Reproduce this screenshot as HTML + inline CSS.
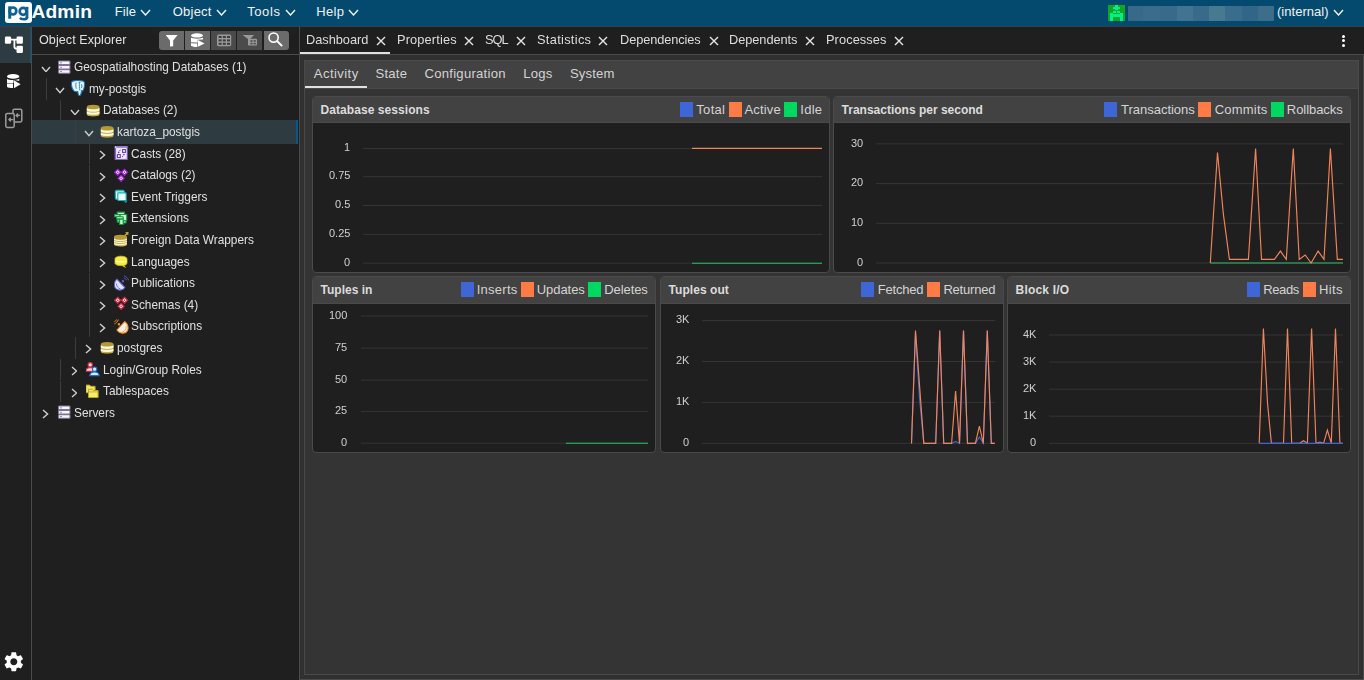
<!DOCTYPE html>
<html><head><meta charset="utf-8"><title>pgAdmin 4</title>
<style>
html,body{margin:0;padding:0;width:1364px;height:680px;overflow:hidden;background:#1f1f1f}
body{position:relative;font-family:"Liberation Sans", sans-serif}
.r{position:absolute}
.t{position:absolute;white-space:pre;line-height:1}
.g{will-change:transform}
</style></head><body>
<div class="r" style="left:0px;top:0px;width:1364px;height:680px;background:#1f1f1f;"></div>
<div class="r" style="left:0px;top:0px;width:1364px;height:26px;background:#044a6f;"></div>
<div class="r" style="left:0px;top:26px;width:1364px;height:1px;background:#3e3e3e;"></div>
<div class="r" style="left:5px;top:2px;width:27px;height:21px;background:#fff;border-radius:3px"></div>
<svg class="r" style="left:0;top:0" width="32" height="26" viewBox="0 0 32 26"><g fill="#0f5f98">
<rect x="8.2" y="6.3" width="3" height="12.4"/>
<ellipse cx="12.95" cy="11" rx="3.35" ry="3.5" fill="none" stroke="#0f5f98" stroke-width="2.7"/>
<ellipse cx="23.1" cy="11.45" rx="3.4" ry="3.5" fill="none" stroke="#0f5f98" stroke-width="2.7"/>
<rect x="25.6" y="6.8" width="2.8" height="11"/>
<path d="M28.4,17.2 C28.4,19.8 26.6,20.5 23.6,20.5 C21.5,20.5 20,20 19,18.8 L20.8,17 C21.6,17.8 22.6,18 23.6,18 C25,18 25.6,17.6 25.6,16.8 Z"/>
</g></svg>
<div class="t" style="left:31.40px;top:2.15px;font-size:19.2px;color:#ffffff;font-weight:700;letter-spacing:0.199px;">Admin</div>
<div class="t" style="left:114.70px;top:5.00px;font-size:13px;color:#f2f2f2;font-weight:400;letter-spacing:0.149px;">File</div>
<svg class="r" style="left:140px;top:8.7px" width="11" height="7"><polyline points="1,1 5.5,6 10,1" fill="none" stroke="#f2f2f2" stroke-width="1.4"/></svg>
<div class="t" style="left:172.70px;top:5.00px;font-size:13px;color:#f2f2f2;font-weight:400;letter-spacing:0.244px;">Object</div>
<svg class="r" style="left:215.5px;top:8.7px" width="11" height="7"><polyline points="1,1 5.5,6 10,1" fill="none" stroke="#f2f2f2" stroke-width="1.4"/></svg>
<div class="t" style="left:247.20px;top:5.00px;font-size:13px;color:#f2f2f2;font-weight:400;letter-spacing:0.585px;">Tools</div>
<svg class="r" style="left:284.5px;top:8.7px" width="11" height="7"><polyline points="1,1 5.5,6 10,1" fill="none" stroke="#f2f2f2" stroke-width="1.4"/></svg>
<div class="t" style="left:316.20px;top:5.00px;font-size:13px;color:#f2f2f2;font-weight:400;letter-spacing:0.317px;">Help</div>
<svg class="r" style="left:347.5px;top:8.7px" width="11" height="7"><polyline points="1,1 5.5,6 10,1" fill="none" stroke="#f2f2f2" stroke-width="1.4"/></svg>
<svg class="r" style="left:1108px;top:5px" width="17" height="16" shape-rendering="crispEdges">
<rect width="17" height="16" fill="#10a624"/>
<rect x="7" y="0" width="3" height="5" fill="#00f08c"/><rect x="5" y="2" width="7" height="2" fill="#00f08c"/>
<rect x="5" y="6" width="3" height="2" fill="#00f08c"/><rect x="9" y="6" width="3" height="2" fill="#00f08c"/>
<rect x="2" y="8" width="13" height="8" fill="#00f08c"/>
<rect x="5" y="12" width="7" height="4" fill="#10a624"/>
<rect x="5" y="8" width="7" height="1" fill="#10a624"/>
</svg>
<div class="r" style="left:1128px;top:6px;width:15px;height:15px;background:#396988;"></div>
<div class="r" style="left:1143px;top:6px;width:17px;height:15px;background:#3b6c8a;"></div>
<div class="r" style="left:1160px;top:6px;width:17px;height:15px;background:#396a89;"></div>
<div class="r" style="left:1177px;top:6px;width:16px;height:15px;background:#42748f;"></div>
<div class="r" style="left:1193px;top:6px;width:16px;height:15px;background:#386a89;"></div>
<div class="r" style="left:1209px;top:6px;width:16px;height:15px;background:#477990;"></div>
<div class="r" style="left:1225px;top:6px;width:17px;height:15px;background:#3a6d8b;"></div>
<div class="r" style="left:1242px;top:6px;width:16px;height:15px;background:#326688;"></div>
<div class="r" style="left:1258px;top:6px;width:16px;height:15px;background:#3c6d8a;"></div>
<div class="t" style="left:1277.00px;top:5.40px;font-size:13px;color:#f2f2f2;font-weight:400;letter-spacing:0.023px;">(internal)</div>
<svg class="r" style="left:1332.5px;top:9px" width="11" height="7"><polyline points="1,1 5.5,6 10,1" fill="none" stroke="#f2f2f2" stroke-width="1.4"/></svg>
<div class="r" style="left:0px;top:27px;width:30px;height:36px;background:#2d3b42;"></div>
<div class="r" style="left:30px;top:27px;width:1px;height:36px;background:#0b5784;"></div>
<div class="r" style="left:31px;top:27px;width:1px;height:653px;background:#4a4a4a;"></div>
<div class="t g" style="left:39.30px;top:33.63px;font-size:12.6px;color:#e0e0e0;font-weight:400;letter-spacing:0.050px;">Object Explorer</div>
<div class="r" style="left:32px;top:54px;width:267px;height:1px;background:#4a4a4a;"></div>
<div class="r" style="left:299px;top:27px;width:1px;height:653px;background:#4a4a4a;"></div>
<div class="r" style="left:159px;top:31px;width:25px;height:19px;background:#6b6b6b;border-radius:3px 0 0 3px"></div>
<div class="r" style="left:185px;top:31px;width:25px;height:19px;background:#6b6b6b;"></div>
<div class="r" style="left:211px;top:31px;width:25px;height:19px;background:#4b4b4b;"></div>
<div class="r" style="left:237px;top:31px;width:25px;height:19px;background:#4b4b4b;"></div>
<div class="r" style="left:264px;top:31px;width:25px;height:19px;background:#6b6b6b;border-radius:0 3px 3px 0"></div>
<div class="r" style="left:32px;top:120px;width:264px;height:24px;background:#2e3c42;"></div>
<div class="r" style="left:296px;top:120px;width:2px;height:24px;background:#0b5784;"></div>
<svg class="r" style="left:41.0px;top:65.60000000000001px" width="10" height="6.6"><polyline points="1,1 5.0,5.6 9,1" fill="none" stroke="#d0d0d0" stroke-width="1.4"/></svg>
<svg class="r" style="left:57.00px;top:58.50px" width="16" height="16" viewBox="0 0 16 16"><g transform="translate(0,-0.6)"><g fill="#f8f6fc" stroke="#7f7398" stroke-width="1.1">
<rect x="1.5" y="2.6" width="11.5" height="3.6" rx="0.8"/>
<rect x="1.5" y="7" width="11.5" height="3.6" rx="0.8"/>
<rect x="1.5" y="11.3" width="11.5" height="3.6" rx="0.8"/>
</g><g fill="#8a7fa6"><rect x="3" y="4" width="2" height="0.9"/><rect x="3" y="8.4" width="2" height="0.9"/><rect x="3" y="12.7" width="2" height="0.9"/></g></g></svg>
<div class="t g" style="left:74.40px;top:62.27px;font-size:11.85px;color:#e0e0e0;font-weight:400;">Geospatialhosting Databases (1)</div>
<div class="r" style="left:46.00px;top:78.10px;width:1px;height:21.6px;background:#3c3c3c"></div>
<svg class="r" style="left:55.269999999999996px;top:87.20000000000002px" width="10" height="6.6"><polyline points="1,1 5.0,5.6 9,1" fill="none" stroke="#d0d0d0" stroke-width="1.4"/></svg>
<svg class="r" style="left:71.27px;top:80.10px" width="16" height="16" viewBox="0 0 16 16"><path d="M1.5,1.2 C4,0.5 10,0.5 12.5,1.2 C13.7,1.8 13.7,4 13.3,6.5 C12.9,9 12.1,11 11,11.2 L10.6,10.2 C10.4,12.5 10.2,14.5 9.1,15.4 C8.1,15.9 7.4,15.2 7.2,14 L6.8,11.6 C5.5,11.9 4,11.6 3,10.9 C1.5,9.6 0.6,7 0.4,4.5 C0.3,2.8 0.7,1.6 1.5,1.2 Z" fill="#e4f7ff" stroke="#2277b4" stroke-width="1.1"/>
<path d="M5.2,2.6 C4.5,4.5 4.6,6.8 5.4,8.6 M7.6,2.2 L9.6,2.2 M8.6,2.4 C8.2,5 8.4,8 8.9,10.5 M10.6,4.2 C11,5.5 10.9,7 10.4,8.2" stroke="#2a7cb8" stroke-width="0.9" fill="none"/></svg>
<div class="t g" style="left:88.67px;top:83.87px;font-size:11.85px;color:#e0e0e0;font-weight:400;">my-postgis</div>
<div class="r" style="left:60.27px;top:99.70px;width:1px;height:21.6px;background:#3c3c3c"></div>
<svg class="r" style="left:69.53999999999999px;top:108.80000000000001px" width="10" height="6.6"><polyline points="1,1 5.0,5.6 9,1" fill="none" stroke="#d0d0d0" stroke-width="1.4"/></svg>
<svg class="r" style="left:85.54px;top:101.70px" width="16" height="16" viewBox="0 0 16 16"><g transform="translate(0,0.6)"><g>
<path d="M0.8,4.3 L0.8,12 C0.8,13.2 3.6,13.9 7.15,13.9 C10.7,13.9 13.5,13.2 13.5,12 L13.5,4.3 Z" fill="#c2a843"/>
<ellipse cx="7.15" cy="4.3" rx="6.35" ry="2.2" fill="#b39a36"/>
<path d="M0.8,5.4 C1.4,7.2 12.9,7.2 13.5,5.4 L13.5,7.8 C12.9,9.6 1.4,9.6 0.8,7.8 Z" fill="#fbf8dc"/>
<path d="M0.8,8.6 C1.4,10.4 12.9,10.4 13.5,8.6 L13.5,10.9 C12.9,12.7 1.4,12.7 0.8,10.9 Z" fill="#fbf8dc"/>
</g></g></svg>
<div class="t g" style="left:102.94px;top:105.47px;font-size:11.85px;color:#e0e0e0;font-weight:400;">Databases (2)</div>
<div class="r" style="left:74.54px;top:121.30px;width:1px;height:21.6px;background:#3c3c3c"></div>
<svg class="r" style="left:83.81px;top:130.4px" width="10" height="6.6"><polyline points="1,1 5.0,5.6 9,1" fill="none" stroke="#d0d0d0" stroke-width="1.4"/></svg>
<svg class="r" style="left:99.81px;top:123.30px" width="16" height="16" viewBox="0 0 16 16"><g transform="translate(0,0.8)"><g>
<path d="M0.8,4.3 L0.8,12 C0.8,13.2 3.6,13.9 7.15,13.9 C10.7,13.9 13.5,13.2 13.5,12 L13.5,4.3 Z" fill="#c2a843"/>
<ellipse cx="7.15" cy="4.3" rx="6.35" ry="2.2" fill="#b39a36"/>
<path d="M0.8,5.4 C1.4,7.2 12.9,7.2 13.5,5.4 L13.5,7.8 C12.9,9.6 1.4,9.6 0.8,7.8 Z" fill="#fbf8dc"/>
<path d="M0.8,8.6 C1.4,10.4 12.9,10.4 13.5,8.6 L13.5,10.9 C12.9,12.7 1.4,12.7 0.8,10.9 Z" fill="#fbf8dc"/>
</g></g></svg>
<div class="t g" style="left:117.21px;top:127.07px;font-size:11.85px;color:#e0e0e0;font-weight:400;">kartoza_postgis</div>
<div class="r" style="left:88.81px;top:142.90px;width:1px;height:21.6px;background:#3c3c3c"></div>
<svg class="r" style="left:99.38px;top:150.00000000000003px" width="6.6" height="10"><polyline points="1,1 5.6,5.0 1,9" fill="none" stroke="#d0d0d0" stroke-width="1.4"/></svg>
<svg class="r" style="left:114.08px;top:144.90px" width="16" height="16" viewBox="0 0 16 16"><rect x="0.6" y="1.2" width="13.2" height="13.8" rx="0.6" fill="#8a62d6"/>
<rect x="2.1" y="2.7" width="10.6" height="11.2" fill="#f0eaff"/>
<path d="M0.6,1.2 L13.8,1.2 L12.7,2.7 L2.1,2.7 Z" fill="#a888e6"/>
<circle cx="1.5" cy="2.2" r="0.8" fill="#f3eeff"/>
<rect x="8.6" y="4.6" width="2.8" height="2.8" fill="#fff" stroke="#6a3cc4" stroke-width="1.1"/>
<rect x="3.4" y="9.6" width="2.9" height="2.9" fill="#fff" stroke="#6a3cc4" stroke-width="1.1"/>
<circle cx="4.7" cy="7.4" r="0.8" fill="#5a2cc0"/><circle cx="9.9" cy="9.6" r="0.8" fill="#5a2cc0"/>
<path d="M5.3,5.6 L6.6,5.1 M8,11.7 L9.2,11.2" stroke="#6a3cc4" stroke-width="0.9"/></svg>
<div class="t g" style="left:131.48px;top:148.67px;font-size:11.85px;color:#e0e0e0;font-weight:400;">Casts (28)</div>
<div class="r" style="left:88.81px;top:164.50px;width:1px;height:21.6px;background:#3c3c3c"></div>
<svg class="r" style="left:99.38px;top:171.6px" width="6.6" height="10"><polyline points="1,1 5.6,5.0 1,9" fill="none" stroke="#d0d0d0" stroke-width="1.4"/></svg>
<svg class="r" style="left:114.08px;top:166.50px" width="16" height="16" viewBox="0 0 16 16"><g fill="#f4ecff" stroke="#9a1ed8" stroke-width="1.3">
<path d="M3.7,2.3 L6.7,5.3 L3.7,8.3 L0.7000000000000002,5.3 Z"/><path d="M10.5,2.3 L13.5,5.3 L10.5,8.3 L7.5,5.3 Z"/><path d="M7.1,8.3 L10.1,11.3 L7.1,14.3 L4.1,11.3 Z"/>
</g><g fill="#9a1ed8"><circle cx="3.7" cy="5.3" r="0.8"/><circle cx="10.5" cy="5.3" r="0.8"/><circle cx="7.1" cy="11.3" r="0.8"/></g></svg>
<div class="t g" style="left:131.48px;top:170.27px;font-size:11.85px;color:#e0e0e0;font-weight:400;">Catalogs (2)</div>
<div class="r" style="left:88.81px;top:186.10px;width:1px;height:21.6px;background:#3c3c3c"></div>
<svg class="r" style="left:99.38px;top:193.20000000000002px" width="6.6" height="10"><polyline points="1,1 5.6,5.0 1,9" fill="none" stroke="#d0d0d0" stroke-width="1.4"/></svg>
<svg class="r" style="left:114.08px;top:188.10px" width="16" height="16" viewBox="0 0 16 16"><rect x="1.3" y="2.3" width="9" height="9" rx="1.4" fill="#8fdfe6" stroke="#1aaebb" stroke-width="1.1"/>
<path d="M2.6,3.8 L2.6,9.8" stroke="#f0ffff" stroke-width="0.9"/>
<rect x="3.9" y="4.9" width="8.2" height="7.6" rx="0.8" fill="#eafeff" stroke="#20b3c0" stroke-width="1.1"/>
<path d="M10.2,12.5 L12.2,14.6" stroke="#1796a3" stroke-width="1.4"/><path d="M11.2,12 L13.4,12.6 L12.6,14.8 Z" fill="#1796a3"/></svg>
<div class="t g" style="left:131.48px;top:191.87px;font-size:11.85px;color:#e0e0e0;font-weight:400;">Event Triggers</div>
<div class="r" style="left:88.81px;top:207.70px;width:1px;height:21.6px;background:#3c3c3c"></div>
<svg class="r" style="left:99.38px;top:214.80000000000004px" width="6.6" height="10"><polyline points="1,1 5.6,5.0 1,9" fill="none" stroke="#d0d0d0" stroke-width="1.4"/></svg>
<svg class="r" style="left:114.08px;top:209.70px" width="16" height="16" viewBox="0 0 16 16"><g fill="#c9f4d2" stroke="#119a3c" stroke-width="1.1" stroke-linejoin="round">
<rect x="3.2" y="2.1" width="7.4" height="2.4"/>
<rect x="5.9" y="4.5" width="6.8" height="6.1"/>
<rect x="0.6" y="4.6" width="5.3" height="2.2"/>
<rect x="3.2" y="8.9" width="1.9" height="3.2"/>
<rect x="5.6" y="8.9" width="3.6" height="5.6"/>
<rect x="9.6" y="10.8" width="2.4" height="2.2"/>
<rect x="2.6" y="6.8" width="6.6" height="2.1"/>
</g></svg>
<div class="t g" style="left:131.48px;top:213.47px;font-size:11.85px;color:#e0e0e0;font-weight:400;">Extensions</div>
<div class="r" style="left:88.81px;top:229.30px;width:1px;height:21.6px;background:#3c3c3c"></div>
<svg class="r" style="left:99.38px;top:236.4px" width="6.6" height="10"><polyline points="1,1 5.6,5.0 1,9" fill="none" stroke="#d0d0d0" stroke-width="1.4"/></svg>
<svg class="r" style="left:114.08px;top:231.30px" width="16" height="16" viewBox="0 0 16 16"><g>
<path d="M-0.1,6 L-0.1,13.4 C-0.1,14.7 2.8,15.5 6.45,15.5 C10.1,15.5 13,14.7 13,13.4 L13,6 Z" fill="#c2a843"/>
<ellipse cx="6.45" cy="6" rx="6.55" ry="2.3" fill="#b39a36"/>
<path d="M0,7.6 C0.8,9.4 12.1,9.4 12.9,7.6 L12.9,8.8 C12.1,10.6 0.8,10.6 0,8.8 Z" fill="#f6f0cc"/>
<path d="M0,9.6 C0.8,11.4 12.1,11.4 12.9,9.6 L12.9,10.8 C12.1,12.6 0.8,12.6 0,10.8 Z" fill="#f6f0cc"/>
<path d="M0,11.6 C0.8,13.4 12.1,13.4 12.9,11.6 L12.9,12.9 C12.1,14.7 0.8,14.7 0,12.9 Z" fill="#f6f0cc"/>
<path d="M10.6,4.8 L13.4,2.2" stroke="#c9ab2c" stroke-width="1.4"/><path d="M11,1.2 L14.6,1 L14.2,4.6 Z" fill="#c9ab2c"/>
</g></svg>
<div class="t g" style="left:131.48px;top:235.07px;font-size:11.85px;color:#e0e0e0;font-weight:400;">Foreign Data Wrappers</div>
<div class="r" style="left:88.81px;top:250.90px;width:1px;height:21.6px;background:#3c3c3c"></div>
<svg class="r" style="left:99.38px;top:258.0px" width="6.6" height="10"><polyline points="1,1 5.6,5.0 1,9" fill="none" stroke="#d0d0d0" stroke-width="1.4"/></svg>
<svg class="r" style="left:114.08px;top:252.90px" width="16" height="16" viewBox="0 0 16 16"><path d="M1,6 C1,4.2 3.8,3.2 7,3.2 C10.2,3.2 13,4.2 13,6 L13,10 C13,11.6 11,12.3 9.5,12.4 L11.5,14.3 L8,12.6 C4,12.6 1,11.8 1,10 Z" fill="#f5ec48" stroke="#d7c521" stroke-width="0.8"/>
<path d="M1.4,7.8 C3,9.2 11,9.2 12.6,7.8" stroke="#fffab0" stroke-width="1.1" fill="none"/></svg>
<div class="t g" style="left:131.48px;top:256.67px;font-size:11.85px;color:#e0e0e0;font-weight:400;">Languages</div>
<div class="r" style="left:88.81px;top:272.50px;width:1px;height:21.6px;background:#3c3c3c"></div>
<svg class="r" style="left:99.38px;top:279.59999999999997px" width="6.6" height="10"><polyline points="1,1 5.6,5.0 1,9" fill="none" stroke="#d0d0d0" stroke-width="1.4"/></svg>
<svg class="r" style="left:114.08px;top:274.50px" width="16" height="16" viewBox="0 0 16 16"><path d="M2.9,4.1 L11,12.5 C9,15.5 4,16.3 1.3,13 C-0.6,10.5 0.2,6.4 2.9,4.1 Z" fill="#e2e4fa" stroke="#5a5fcc" stroke-width="1.1" stroke-linejoin="round"/>
<path d="M2.4,8.6 C2.4,11 3.8,13.2 6.6,14" stroke="#6a6fd0" stroke-width="0.9" fill="none"/>
<rect x="7.8" y="5.1" width="2.2" height="2.2" fill="#5a5fd8"/>
<path d="M9.9,0.8 C12,1.4 14,3.2 14.6,5.3 M9.9,2.8 C11.2,3.2 12.2,4.2 12.6,5.3" stroke="#5055c0" stroke-width="1" fill="none"/></svg>
<div class="t g" style="left:131.48px;top:278.27px;font-size:11.85px;color:#e0e0e0;font-weight:400;">Publications</div>
<div class="r" style="left:88.81px;top:294.10px;width:1px;height:21.6px;background:#3c3c3c"></div>
<svg class="r" style="left:99.38px;top:301.2px" width="6.6" height="10"><polyline points="1,1 5.6,5.0 1,9" fill="none" stroke="#d0d0d0" stroke-width="1.4"/></svg>
<svg class="r" style="left:114.08px;top:296.10px" width="16" height="16" viewBox="0 0 16 16"><g fill="#fff0f2" stroke="#d0223e" stroke-width="1.3">
<path d="M3.7,1.2999999999999998 L6.7,4.3 L3.7,7.3 L0.7000000000000002,4.3 Z"/><path d="M10.5,1.2999999999999998 L13.5,4.3 L10.5,7.3 L7.5,4.3 Z"/><path d="M7.1,7.300000000000001 L10.1,10.3 L7.1,13.3 L4.1,10.3 Z"/>
</g><g fill="#d0223e"><circle cx="3.7" cy="4.3" r="0.8"/><circle cx="10.5" cy="4.3" r="0.8"/><circle cx="7.1" cy="10.3" r="0.8"/></g></svg>
<div class="t g" style="left:131.48px;top:299.87px;font-size:11.85px;color:#e0e0e0;font-weight:400;">Schemas (4)</div>
<div class="r" style="left:88.81px;top:315.70px;width:1px;height:21.6px;background:#3c3c3c"></div>
<svg class="r" style="left:99.38px;top:322.8px" width="6.6" height="10"><polyline points="1,1 5.6,5.0 1,9" fill="none" stroke="#d0d0d0" stroke-width="1.4"/></svg>
<svg class="r" style="left:114.08px;top:317.70px" width="16" height="16" viewBox="0 0 16 16"><path d="M2.9,12 L10.7,3.6 C13.5,5.5 15,9.5 13.6,12.6 C12,15.8 6,16.4 2.9,12 Z" fill="#fff0e0" stroke="#f38a22" stroke-width="1.1" stroke-linejoin="round"/>
<path d="M12.2,8.2 C12.4,11 10.8,13.4 8,14.2" stroke="#f5a050" stroke-width="0.9" fill="none"/>
<rect x="3.8" y="5.2" width="2.2" height="2.2" fill="#f39022"/>
<path d="M0.4,6 C1.8,5.4 3.8,3.6 4.4,1.6 M0.3,3.8 C1.2,3.4 2.4,2.4 2.8,1.4" stroke="#e8891e" stroke-width="1" fill="none"/></svg>
<div class="t g" style="left:131.48px;top:321.47px;font-size:11.85px;color:#e0e0e0;font-weight:400;">Subscriptions</div>
<div class="r" style="left:74.54px;top:337.30px;width:1px;height:21.6px;background:#3c3c3c"></div>
<svg class="r" style="left:85.11px;top:344.4px" width="6.6" height="10"><polyline points="1,1 5.6,5.0 1,9" fill="none" stroke="#d0d0d0" stroke-width="1.4"/></svg>
<svg class="r" style="left:99.81px;top:339.30px" width="16" height="16" viewBox="0 0 16 16"><g transform="translate(0,0.8)"><g>
<path d="M0.8,4.3 L0.8,12 C0.8,13.2 3.6,13.9 7.15,13.9 C10.7,13.9 13.5,13.2 13.5,12 L13.5,4.3 Z" fill="#c2a843"/>
<ellipse cx="7.15" cy="4.3" rx="6.35" ry="2.2" fill="#b39a36"/>
<path d="M0.8,5.4 C1.4,7.2 12.9,7.2 13.5,5.4 L13.5,7.8 C12.9,9.6 1.4,9.6 0.8,7.8 Z" fill="#fbf8dc"/>
<path d="M0.8,8.6 C1.4,10.4 12.9,10.4 13.5,8.6 L13.5,10.9 C12.9,12.7 1.4,12.7 0.8,10.9 Z" fill="#fbf8dc"/>
</g></g></svg>
<div class="t g" style="left:117.21px;top:343.07px;font-size:11.85px;color:#e0e0e0;font-weight:400;">postgres</div>
<div class="r" style="left:60.27px;top:358.90px;width:1px;height:21.6px;background:#3c3c3c"></div>
<svg class="r" style="left:70.83999999999999px;top:366.0px" width="6.6" height="10"><polyline points="1,1 5.6,5.0 1,9" fill="none" stroke="#d0d0d0" stroke-width="1.4"/></svg>
<svg class="r" style="left:85.54px;top:360.90px" width="16" height="16" viewBox="0 0 16 16"><g transform="translate(-1.0,0)"><circle cx="5.2" cy="3.8" r="2.2" fill="#ffe0e4" stroke="#d8283f" stroke-width="1.1"/>
<path d="M0.6,10.2 C0.8,7.6 2.8,6.6 5.2,6.6 C7.6,6.6 9.2,7.4 9.6,10.2 Z" fill="#ffe0e4" stroke="#d8283f" stroke-width="1.1"/>
<circle cx="9.6" cy="8.2" r="2.2" fill="#d8ecff" stroke="#1f6fd0" stroke-width="1.1"/>
<path d="M4.8,14.6 C5,12 7,11 9.6,11 C12.2,11 13.8,12 14.2,14.6 Z" fill="#d8ecff" stroke="#1f6fd0" stroke-width="1.1"/></g></svg>
<div class="t g" style="left:102.94px;top:364.67px;font-size:11.85px;color:#e0e0e0;font-weight:400;">Login/Group Roles</div>
<div class="r" style="left:60.27px;top:380.50px;width:1px;height:21.6px;background:#3c3c3c"></div>
<svg class="r" style="left:70.83999999999999px;top:387.59999999999997px" width="6.6" height="10"><polyline points="1,1 5.6,5.0 1,9" fill="none" stroke="#d0d0d0" stroke-width="1.4"/></svg>
<svg class="r" style="left:85.54px;top:382.50px" width="16" height="16" viewBox="0 0 16 16"><g transform="translate(-1.3,-0.3)"><path d="M1.2,2.4 L5,2.4 L6,3.6 L10.4,3.6 L10.4,10 L1.2,10 Z" fill="#f2e56a" stroke="#b9a61c" stroke-width="1"/>
<path d="M3.8,6.6 L7.6,6.6 L8.6,7.8 L13.4,7.8 L13.4,14.8 L3.8,14.8 Z" fill="#f6ea70" stroke="#b9a61c" stroke-width="1"/>
<path d="M3.8,9.2 L13.4,9.2" stroke="#b9a61c" stroke-width="0.8"/></g></svg>
<div class="t g" style="left:102.94px;top:386.27px;font-size:11.85px;color:#e0e0e0;font-weight:400;">Tablespaces</div>
<svg class="r" style="left:42.3px;top:409.2px" width="6.6" height="10"><polyline points="1,1 5.6,5.0 1,9" fill="none" stroke="#d0d0d0" stroke-width="1.4"/></svg>
<svg class="r" style="left:57.00px;top:404.10px" width="16" height="16" viewBox="0 0 16 16"><g transform="translate(0,-0.6)"><g fill="#f8f6fc" stroke="#7f7398" stroke-width="1.1">
<rect x="1.5" y="2.6" width="11.5" height="3.6" rx="0.8"/>
<rect x="1.5" y="7" width="11.5" height="3.6" rx="0.8"/>
<rect x="1.5" y="11.3" width="11.5" height="3.6" rx="0.8"/>
</g><g fill="#8a7fa6"><rect x="3" y="4" width="2" height="0.9"/><rect x="3" y="8.4" width="2" height="0.9"/><rect x="3" y="12.7" width="2" height="0.9"/></g></g></svg>
<div class="t g" style="left:74.40px;top:407.87px;font-size:11.85px;color:#e0e0e0;font-weight:400;">Servers</div>
<div class="t g" style="left:305.80px;top:34.36px;font-size:12.8px;color:#dedede;font-weight:400;letter-spacing:-0.026px;">Dashboard</div>
<svg class="r" style="left:376.2px;top:36px" width="10" height="10"><path d="M1,1 L9,9 M9,1 L1,9" stroke="#e6e6e6" stroke-width="1.4" fill="none"/></svg>
<div class="t g" style="left:396.60px;top:34.36px;font-size:12.8px;color:#dedede;font-weight:400;letter-spacing:0.141px;">Properties</div>
<svg class="r" style="left:464.2px;top:36px" width="10" height="10"><path d="M1,1 L9,9 M9,1 L1,9" stroke="#e6e6e6" stroke-width="1.4" fill="none"/></svg>
<div class="t g" style="left:484.50px;top:34.36px;font-size:12.8px;color:#dedede;font-weight:400;letter-spacing:-1.055px;">SQL</div>
<svg class="r" style="left:516.3px;top:36px" width="10" height="10"><path d="M1,1 L9,9 M9,1 L1,9" stroke="#e6e6e6" stroke-width="1.4" fill="none"/></svg>
<div class="t g" style="left:536.60px;top:34.36px;font-size:12.8px;color:#dedede;font-weight:400;letter-spacing:0.311px;">Statistics</div>
<svg class="r" style="left:598.4px;top:36px" width="10" height="10"><path d="M1,1 L9,9 M9,1 L1,9" stroke="#e6e6e6" stroke-width="1.4" fill="none"/></svg>
<div class="t g" style="left:619.80px;top:34.36px;font-size:12.8px;color:#dedede;font-weight:400;letter-spacing:-0.112px;">Dependencies</div>
<svg class="r" style="left:708.5px;top:36px" width="10" height="10"><path d="M1,1 L9,9 M9,1 L1,9" stroke="#e6e6e6" stroke-width="1.4" fill="none"/></svg>
<div class="t g" style="left:729.10px;top:34.36px;font-size:12.8px;color:#dedede;font-weight:400;letter-spacing:-0.057px;">Dependents</div>
<svg class="r" style="left:805.3px;top:36px" width="10" height="10"><path d="M1,1 L9,9 M9,1 L1,9" stroke="#e6e6e6" stroke-width="1.4" fill="none"/></svg>
<div class="t g" style="left:825.80px;top:34.36px;font-size:12.8px;color:#dedede;font-weight:400;letter-spacing:0.081px;">Processes</div>
<svg class="r" style="left:893.7px;top:36px" width="10" height="10"><path d="M1,1 L9,9 M9,1 L1,9" stroke="#e6e6e6" stroke-width="1.4" fill="none"/></svg>
<div class="r" style="left:300px;top:52px;width:90px;height:2px;background:#e0e0e0;"></div>
<div class="r" style="left:1342.3px;top:34.7px;width:3px;height:3px;border-radius:50%;background:#fff"></div>
<div class="r" style="left:1342.3px;top:39.2px;width:3px;height:3px;border-radius:50%;background:#fff"></div>
<div class="r" style="left:1342.3px;top:43.6px;width:3px;height:3px;border-radius:50%;background:#fff"></div>
<div class="r" style="left:300px;top:54px;width:1064px;height:1px;background:#4a4a4a;"></div>
<div class="r" style="left:300px;top:55px;width:1063px;height:624px;background:#303030;"></div>
<div class="r" style="left:1363px;top:55px;width:1px;height:625px;background:#4a4a4a;"></div>
<div class="r" style="left:300px;top:679px;width:1064px;height:1px;background:#4a4a4a;"></div>
<div class="r" style="left:304px;top:60px;width:1053px;height:613px;border:1px solid #4a4a4a;background:#343434"></div>
<div class="r" style="left:305px;top:61px;width:1053px;height:27px;background:#424242;"></div>
<div class="t" style="left:313.80px;top:66.91px;font-size:13.1px;color:#d4d4d4;font-weight:400;letter-spacing:0.419px;">Activity</div>
<div class="t" style="left:375.50px;top:66.91px;font-size:13.1px;color:#d4d4d4;font-weight:400;letter-spacing:0.230px;">State</div>
<div class="t" style="left:424.50px;top:66.91px;font-size:13.1px;color:#d4d4d4;font-weight:400;letter-spacing:0.259px;">Configuration</div>
<div class="t" style="left:523.20px;top:66.91px;font-size:13.1px;color:#d4d4d4;font-weight:400;letter-spacing:0.265px;">Logs</div>
<div class="t" style="left:569.90px;top:66.91px;font-size:13.1px;color:#d4d4d4;font-weight:400;letter-spacing:0.169px;">System</div>
<div class="r" style="left:305px;top:88px;width:1053px;height:1px;background:#4a4a4a;"></div>
<div class="r" style="left:305px;top:86px;width:62px;height:2px;background:#e0e0e0;"></div>
<div class="r" style="left:312px;top:96px;width:516px;height:175px;border:1px solid #4a4a4a;border-radius:4px;background:#1f1f1f;overflow:hidden"><div style="position:absolute;left:0;top:0;right:0;height:25px;background:#424242;border-bottom:1px solid #4a4a4a"></div></div>
<div class="t" style="left:320.60px;top:103.74px;font-size:12px;color:#dcdcdc;font-weight:700;letter-spacing:0.059px;">Database sessions</div>
<div class="t" style="left:696.30px;top:102.80px;font-size:13px;color:#d4d4d4;font-weight:400;letter-spacing:0.308px;">Total</div>
<div class="r" style="left:680px;top:102px;width:13px;height:15px;background:#3e66d6;"></div>
<div class="t" style="left:744.40px;top:102.80px;font-size:13px;color:#d4d4d4;font-weight:400;letter-spacing:0.179px;">Active</div>
<div class="r" style="left:729px;top:102px;width:13px;height:15px;background:#ff7b45;"></div>
<div class="t" style="left:800.30px;top:102.80px;font-size:13px;color:#d4d4d4;font-weight:400;letter-spacing:0.244px;">Idle</div>
<div class="r" style="left:784px;top:102px;width:13px;height:15px;background:#00d961;"></div>
<div class="t g" style="right:1014.00px;top:142.19px;font-size:11px;color:#d0d0d0;font-weight:400;text-align:right">1</div>
<div class="t g" style="right:1014.00px;top:170.39px;font-size:11px;color:#d0d0d0;font-weight:400;text-align:right">0.75</div>
<div class="t g" style="right:1014.00px;top:199.19px;font-size:11px;color:#d0d0d0;font-weight:400;text-align:right">0.5</div>
<div class="t g" style="right:1014.00px;top:228.09px;font-size:11px;color:#d0d0d0;font-weight:400;text-align:right">0.25</div>
<div class="t g" style="right:1014.00px;top:256.89px;font-size:11px;color:#d0d0d0;font-weight:400;text-align:right">0</div>
<div class="r" style="left:833px;top:96px;width:516px;height:175px;border:1px solid #4a4a4a;border-radius:4px;background:#1f1f1f;overflow:hidden"><div style="position:absolute;left:0;top:0;right:0;height:25px;background:#424242;border-bottom:1px solid #4a4a4a"></div></div>
<div class="t" style="left:841.60px;top:103.74px;font-size:12px;color:#dcdcdc;font-weight:700;letter-spacing:-0.004px;">Transactions per second</div>
<div class="t" style="left:1121.00px;top:102.80px;font-size:13px;color:#d4d4d4;font-weight:400;letter-spacing:-0.013px;">Transactions</div>
<div class="r" style="left:1104px;top:102px;width:13px;height:15px;background:#3e66d6;"></div>
<div class="t" style="left:1214.80px;top:102.80px;font-size:13px;color:#d4d4d4;font-weight:400;letter-spacing:0.186px;">Commits</div>
<div class="r" style="left:1198px;top:102px;width:13px;height:15px;background:#ff7b45;"></div>
<div class="t" style="left:1286.80px;top:102.80px;font-size:13px;color:#d4d4d4;font-weight:400;letter-spacing:-0.057px;">Rollbacks</div>
<div class="r" style="left:1271px;top:102px;width:13px;height:15px;background:#00d961;"></div>
<div class="t g" style="right:500.50px;top:137.59px;font-size:11px;color:#d0d0d0;font-weight:400;text-align:right">30</div>
<div class="t g" style="right:500.50px;top:177.29px;font-size:11px;color:#d0d0d0;font-weight:400;text-align:right">20</div>
<div class="t g" style="right:500.50px;top:216.99px;font-size:11px;color:#d0d0d0;font-weight:400;text-align:right">10</div>
<div class="t g" style="right:500.50px;top:256.69px;font-size:11px;color:#d0d0d0;font-weight:400;text-align:right">0</div>
<div class="r" style="left:312px;top:276px;width:342px;height:175px;border:1px solid #4a4a4a;border-radius:4px;background:#1f1f1f;overflow:hidden"><div style="position:absolute;left:0;top:0;right:0;height:26px;background:#424242;border-bottom:1px solid #4a4a4a"></div></div>
<div class="t" style="left:320.60px;top:283.74px;font-size:12px;color:#dcdcdc;font-weight:700;letter-spacing:0.002px;">Tuples in</div>
<div class="t" style="left:476.70px;top:282.80px;font-size:13px;color:#d4d4d4;font-weight:400;letter-spacing:0.264px;">Inserts</div>
<div class="r" style="left:461px;top:282px;width:13px;height:15px;background:#3e66d6;"></div>
<div class="t" style="left:536.80px;top:282.80px;font-size:13px;color:#d4d4d4;font-weight:400;letter-spacing:-0.070px;">Updates</div>
<div class="r" style="left:521px;top:282px;width:13px;height:15px;background:#ff7b45;"></div>
<div class="t" style="left:604.30px;top:282.80px;font-size:13px;color:#d4d4d4;font-weight:400;letter-spacing:-0.096px;">Deletes</div>
<div class="r" style="left:588px;top:282px;width:13px;height:15px;background:#00d961;"></div>
<div class="t g" style="right:1016.60px;top:309.69px;font-size:11px;color:#d0d0d0;font-weight:400;text-align:right">100</div>
<div class="t g" style="right:1016.60px;top:341.79px;font-size:11px;color:#d0d0d0;font-weight:400;text-align:right">75</div>
<div class="t g" style="right:1016.60px;top:373.79px;font-size:11px;color:#d0d0d0;font-weight:400;text-align:right">50</div>
<div class="t g" style="right:1016.60px;top:405.09px;font-size:11px;color:#d0d0d0;font-weight:400;text-align:right">25</div>
<div class="t g" style="right:1016.60px;top:436.89px;font-size:11px;color:#d0d0d0;font-weight:400;text-align:right">0</div>
<div class="r" style="left:660px;top:276px;width:342px;height:175px;border:1px solid #4a4a4a;border-radius:4px;background:#1f1f1f;overflow:hidden"><div style="position:absolute;left:0;top:0;right:0;height:26px;background:#424242;border-bottom:1px solid #4a4a4a"></div></div>
<div class="t" style="left:668.60px;top:283.74px;font-size:12px;color:#dcdcdc;font-weight:700;letter-spacing:0.047px;">Tuples out</div>
<div class="t" style="left:877.80px;top:282.80px;font-size:13px;color:#d4d4d4;font-weight:400;letter-spacing:-0.214px;">Fetched</div>
<div class="r" style="left:861px;top:282px;width:13px;height:15px;background:#3e66d6;"></div>
<div class="t" style="left:943.40px;top:282.80px;font-size:13px;color:#d4d4d4;font-weight:400;letter-spacing:-0.198px;">Returned</div>
<div class="r" style="left:927px;top:282px;width:13px;height:15px;background:#ff7b45;"></div>
<div class="t g" style="right:674.50px;top:314.29px;font-size:11px;color:#d0d0d0;font-weight:400;text-align:right">3K</div>
<div class="t g" style="right:674.50px;top:355.19px;font-size:11px;color:#d0d0d0;font-weight:400;text-align:right">2K</div>
<div class="t g" style="right:674.50px;top:396.09px;font-size:11px;color:#d0d0d0;font-weight:400;text-align:right">1K</div>
<div class="t g" style="right:674.50px;top:436.99px;font-size:11px;color:#d0d0d0;font-weight:400;text-align:right">0</div>
<div class="r" style="left:1007px;top:276px;width:342px;height:175px;border:1px solid #4a4a4a;border-radius:4px;background:#1f1f1f;overflow:hidden"><div style="position:absolute;left:0;top:0;right:0;height:26px;background:#424242;border-bottom:1px solid #4a4a4a"></div></div>
<div class="t" style="left:1015.60px;top:283.74px;font-size:12px;color:#dcdcdc;font-weight:700;letter-spacing:0.186px;">Block I/O</div>
<div class="t" style="left:1263.30px;top:282.80px;font-size:13px;color:#d4d4d4;font-weight:400;letter-spacing:-0.420px;">Reads</div>
<div class="r" style="left:1247px;top:282px;width:13px;height:15px;background:#3e66d6;"></div>
<div class="t" style="left:1319.10px;top:282.80px;font-size:13px;color:#d4d4d4;font-weight:400;letter-spacing:0.336px;">Hits</div>
<div class="r" style="left:1303px;top:282px;width:13px;height:15px;background:#ff7b45;"></div>
<div class="t g" style="right:327.70px;top:328.69px;font-size:11px;color:#d0d0d0;font-weight:400;text-align:right">4K</div>
<div class="t g" style="right:327.70px;top:355.79px;font-size:11px;color:#d0d0d0;font-weight:400;text-align:right">3K</div>
<div class="t g" style="right:327.70px;top:382.89px;font-size:11px;color:#d0d0d0;font-weight:400;text-align:right">2K</div>
<div class="t g" style="right:327.70px;top:409.89px;font-size:11px;color:#d0d0d0;font-weight:400;text-align:right">1K</div>
<div class="t g" style="right:327.70px;top:436.99px;font-size:11px;color:#d0d0d0;font-weight:400;text-align:right">0</div>
<svg class="r" style="left:0;top:0" width="1364" height="680"><line x1="363.2" y1="148.5" x2="822" y2="148.5" stroke="#353535" stroke-width="1"/><line x1="363.2" y1="176.7" x2="822" y2="176.7" stroke="#353535" stroke-width="1"/><line x1="363.2" y1="205.5" x2="822" y2="205.5" stroke="#353535" stroke-width="1"/><line x1="363.2" y1="234.4" x2="822" y2="234.4" stroke="#353535" stroke-width="1"/><line x1="363.2" y1="263.2" x2="822" y2="263.2" stroke="#353535" stroke-width="1"/><line x1="876.2" y1="143.9" x2="1343" y2="143.9" stroke="#353535" stroke-width="1"/><line x1="876.2" y1="183.6" x2="1343" y2="183.6" stroke="#353535" stroke-width="1"/><line x1="876.2" y1="223.3" x2="1343" y2="223.3" stroke="#353535" stroke-width="1"/><line x1="876.2" y1="263" x2="1343" y2="263" stroke="#353535" stroke-width="1"/><line x1="361" y1="316" x2="648" y2="316" stroke="#353535" stroke-width="1"/><line x1="361" y1="348.1" x2="648" y2="348.1" stroke="#353535" stroke-width="1"/><line x1="361" y1="380.1" x2="648" y2="380.1" stroke="#353535" stroke-width="1"/><line x1="361" y1="411.4" x2="648" y2="411.4" stroke="#353535" stroke-width="1"/><line x1="361" y1="443.2" x2="648" y2="443.2" stroke="#353535" stroke-width="1"/><line x1="702" y1="320.6" x2="995.2" y2="320.6" stroke="#353535" stroke-width="1"/><line x1="702" y1="361.5" x2="995.2" y2="361.5" stroke="#353535" stroke-width="1"/><line x1="702" y1="402.4" x2="995.2" y2="402.4" stroke="#353535" stroke-width="1"/><line x1="702" y1="443.3" x2="995.2" y2="443.3" stroke="#353535" stroke-width="1"/><line x1="1049" y1="335" x2="1343" y2="335" stroke="#353535" stroke-width="1"/><line x1="1049" y1="362.1" x2="1343" y2="362.1" stroke="#353535" stroke-width="1"/><line x1="1049" y1="389.2" x2="1343" y2="389.2" stroke="#353535" stroke-width="1"/><line x1="1049" y1="416.2" x2="1343" y2="416.2" stroke="#353535" stroke-width="1"/><line x1="1049" y1="443.3" x2="1343" y2="443.3" stroke="#353535" stroke-width="1"/><polyline points="692.0,148.3 822.0,148.3" fill="none" stroke="#f2845c" stroke-width="1.15" stroke-linejoin="miter"/><polyline points="692.0,263.2 822.0,263.2" fill="none" stroke="#1fc766" stroke-width="1.15" stroke-linejoin="miter"/><polyline points="1210.3,263.0 1343.0,263.0" fill="none" stroke="#1fc766" stroke-width="1.15" stroke-linejoin="miter"/><polyline points="1210.3,263.0 1217.5,152.5 1223.4,214.4 1229.4,259.4 1248.4,259.4 1255.6,148.5 1261.5,259.4 1274.4,259.4 1280.4,251.1 1286.3,259.4 1293.3,148.5 1299.2,259.4 1305.2,255.0 1311.1,263.0 1318.1,251.1 1324.0,259.4 1330.4,148.5 1337.3,259.4 1342.9,259.4" fill="none" stroke="#f2845c" stroke-width="1.15" stroke-linejoin="miter"/><polyline points="566.0,443.2 648.0,443.2" fill="none" stroke="#1fc766" stroke-width="1.15" stroke-linejoin="miter"/><polyline points="911.5,443.4 915.5,333.0 919.5,398.0 923.8,443.4 935.7,443.4 939.7,330.5 943.7,443.4 951.6,443.4 955.6,441.5 959.5,443.4 963.5,330.5 967.5,443.4 975.4,443.4 979.4,437.0 983.3,443.4 987.3,330.5 991.3,443.4 994.8,443.4" fill="none" stroke="#3e66d6" stroke-width="1.15" stroke-linejoin="miter"/><polyline points="911.5,443.4 915.5,330.5 923.8,443.4 935.7,443.4 939.7,330.5 943.7,443.4 951.6,443.4 955.6,391.0 959.5,443.4 963.5,330.5 967.5,443.4 975.4,443.4 979.4,426.1 983.3,443.4 987.3,330.5 991.3,443.4 994.8,443.4" fill="none" stroke="#f2845c" stroke-width="1.15" stroke-linejoin="miter"/><polyline points="1259.2,443.3 1263.4,328.6 1267.6,404.1 1271.4,443.3 1283.5,443.3 1287.5,328.6 1291.7,443.3 1299.7,443.3 1303.5,440.8 1307.4,443.3 1311.6,328.6 1316.0,443.3 1319.8,442.0 1323.6,443.3 1327.4,430.0 1331.3,443.3 1335.5,328.6 1339.9,443.3 1342.7,443.3" fill="none" stroke="#f2845c" stroke-width="1.15" stroke-linejoin="miter"/><polyline points="1259.2,443.3 1342.7,443.3" fill="none" stroke="#3e66d6" stroke-width="1.15" stroke-linejoin="miter"/></svg>

<svg class="r" style="left:0;top:27px" width="30" height="36" viewBox="0 0 30 36">
<rect x="4.9" y="9.6" width="6.2" height="7.1" rx="1.2" fill="#fff"/>
<rect x="16.5" y="9.6" width="6.4" height="7.1" rx="1.2" fill="#fff"/>
<rect x="16.5" y="18.7" width="6.4" height="7.2" rx="1.2" fill="#fff"/>
<path d="M10.5,12.7 L17,12.7 M14.4,12.7 L14.4,19.8 C14.4,21 15.2,21.7 16.6,21.7 L17,21.7" stroke="#fff" stroke-width="1.8" fill="none"/>
</svg>
<svg class="r" style="left:0;top:66px" width="30" height="30" viewBox="0 0 30 30">
<ellipse cx="13.1" cy="10.4" rx="6.1" ry="2.3" fill="#fff"/>
<path d="M7,12.8 C7.6,14.4 18.6,14.4 19.2,12.8 L19.2,13.6 L13.5,13.9 L13.5,17 L7,16.6 Z" fill="#fff"/>
<path d="M7,17.5 L13,17.6 L13,22 C10,22 7,21.4 7,20.4 Z" fill="#fff"/>
<path d="M7,14 L13,14.2 L13,17 L7,16.8 Z" fill="#fff"/>
<path d="M14,14.3 L20.6,18.2 L14,22.2 Z" fill="#fff"/>
<path d="M15,13.9 C17,13.8 18.8,13.4 19.2,12.8 L19.2,15 Z" fill="#fff"/>
</svg>
<svg class="r" style="left:0;top:102px" width="30" height="30" viewBox="0 0 30 30">
<rect x="13" y="7.2" width="8.8" height="12.8" rx="1.4" fill="none" stroke="#9c9c9c" stroke-width="1.5"/>
<rect x="5.8" y="11.4" width="8.4" height="14.1" rx="1.4" fill="#1f1f1f" stroke="#9c9c9c" stroke-width="1.5"/>
<path d="M20,13.4 L16.5,13.4 M18,11.6 L16.2,13.4 L18,15.2" stroke="#9c9c9c" stroke-width="1.4" fill="none"/>
<path d="M13.5,17.6 L9.2,17.6 M10.8,15.8 L9,17.6 L10.8,19.4" stroke="#9c9c9c" stroke-width="1.4" fill="none"/>
</svg>
<svg class="r" style="left:2px;top:650px" width="23.6" height="23.6" viewBox="0 0 24 24">
<path fill="#fff" d="M19.14 12.94c.04-.3.06-.61.06-.94 0-.32-.02-.64-.07-.94l2.03-1.58c.18-.14.23-.41.12-.61l-1.92-3.32c-.12-.22-.37-.29-.59-.22l-2.39.96c-.5-.38-1.03-.7-1.62-.94l-.36-2.54c-.04-.24-.24-.41-.48-.41h-3.84c-.24 0-.43.17-.47.41l-.36 2.54c-.59.24-1.13.57-1.62.94l-2.39-.96c-.22-.08-.47 0-.59.22L2.74 8.87c-.12.21-.08.47.12.61l2.03 1.58c-.05.3-.09.63-.09.94s.02.64.07.94l-2.03 1.58c-.18.14-.23.41-.12.61l1.92 3.32c.12.22.37.29.59.22l2.39-.96c.5.38 1.03.7 1.62.94l.36 2.54c.05.24.24.41.48.41h3.84c.24 0 .44-.17.47-.41l.36-2.54c.59-.24 1.13-.56 1.62-.94l2.39.96c.22.08.47 0 .59-.22l1.92-3.32c.12-.22.07-.47-.12-.61l-2.01-1.58zM12 15.6c-1.98 0-3.6-1.62-3.6-3.6s1.62-3.6 3.6-3.6 3.6 1.62 3.6 3.6-1.62 3.6-3.6 3.6z"/>
</svg>
<svg class="r" style="left:159px;top:31px" width="130" height="19" viewBox="0 0 130 19">
<path d="M6.7,4 L18.6,4 L14.2,9.6 L14.2,15.2 L11,15.6 L11,9.6 Z" fill="#fff"/>
<ellipse cx="38" cy="4.4" rx="6" ry="2.1" fill="#fff"/>
<path d="M32,6.6 C33,8 43,8 44,6.6 L44,8.4 L38.6,8.8 L38.6,11.6 L32,11.2 Z" fill="#fff"/>
<path d="M32,12.2 L38.2,12.4 L38.2,15.9 C35,15.9 32,15.3 32,14.4 Z" fill="#fff"/>
<path d="M38.9,8.9 L45.5,12.4 L38.9,15.8 Z" fill="#fff"/>
<rect x="58" y="3.6" width="14.2" height="11.6" rx="1.6" fill="#9a9a9a"/>
<g fill="#3d3d3d"><rect x="59.6" y="5" width="3" height="2"/><rect x="63.8" y="5" width="3" height="2"/><rect x="68" y="5" width="3" height="2"/>
<rect x="59.6" y="8.4" width="3" height="2"/><rect x="63.8" y="8.4" width="3" height="2"/><rect x="68" y="8.4" width="3" height="2"/>
<rect x="59.6" y="11.8" width="3" height="2"/><rect x="63.8" y="11.8" width="3" height="2"/><rect x="68" y="11.8" width="3" height="2"/></g>
<path d="M83.6,4 L95,4 L91.2,8 L91.2,14 L89,14.4 L89,8 Z" fill="#9a9a9a"/>
<rect x="90" y="7.8" width="8" height="6.8" rx="1" fill="#9a9a9a"/>
<g fill="#4b4b4b"><rect x="91.4" y="9.2" width="2.2" height="1.5"/><rect x="94.6" y="9.2" width="2.2" height="1.5"/><rect x="91.4" y="11.8" width="2.2" height="1.5"/><rect x="94.6" y="11.8" width="2.2" height="1.5"/></g>
<circle cx="114.6" cy="6.6" r="4.6" fill="none" stroke="#fff" stroke-width="1.6"/>
<path d="M118,10 L123.2,15.2" stroke="#fff" stroke-width="1.8"/>
</svg>

</body></html>
